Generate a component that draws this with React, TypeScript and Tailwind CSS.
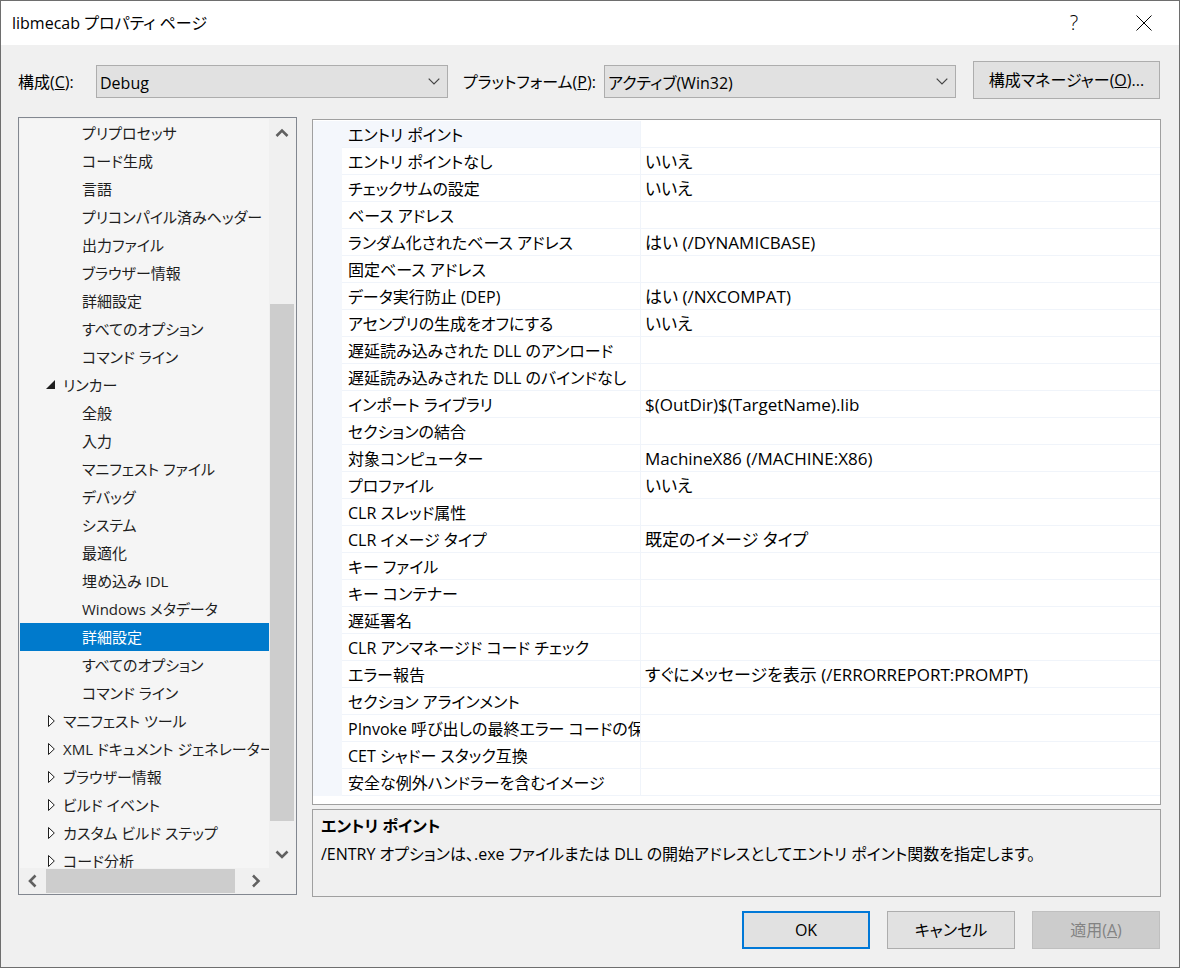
import { useState } from "react";
import type { ReactNode } from "react";

type TreeNode = { label: string; level: 1 | 2; open?: boolean };

const tree: TreeNode[] = [
  { label: "プリプロセッサ", level: 2 },
  { label: "コード生成", level: 2 },
  { label: "言語", level: 2 },
  { label: "プリコンパイル済みヘッダー", level: 2 },
  { label: "出力ファイル", level: 2 },
  { label: "ブラウザー情報", level: 2 },
  { label: "詳細設定", level: 2 },
  { label: "すべてのオプション", level: 2 },
  { label: "コマンド ライン", level: 2 },
  { label: "リンカー", level: 1, open: true },
  { label: "全般", level: 2 },
  { label: "入力", level: 2 },
  { label: "マニフェスト ファイル", level: 2 },
  { label: "デバッグ", level: 2 },
  { label: "システム", level: 2 },
  { label: "最適化", level: 2 },
  { label: "埋め込み IDL", level: 2 },
  { label: "Windows メタデータ", level: 2 },
  { label: "詳細設定", level: 2 },
  { label: "すべてのオプション", level: 2 },
  { label: "コマンド ライン", level: 2 },
  { label: "マニフェスト ツール", level: 1 },
  { label: "XML ドキュメント ジェネレーター", level: 1 },
  { label: "ブラウザー情報", level: 1 },
  { label: "ビルド イベント", level: 1 },
  { label: "カスタム ビルド ステップ", level: 1 },
  { label: "コード分析", level: 1 },
];

const properties: [string, string][] = [
  ["エントリ ポイント", ""],
  ["エントリ ポイントなし", "いいえ"],
  ["チェックサムの設定", "いいえ"],
  ["ベース アドレス", ""],
  ["ランダム化されたベース アドレス", "はい (/DYNAMICBASE)"],
  ["固定ベース アドレス", ""],
  ["データ実行防止 (DEP)", "はい (/NXCOMPAT)"],
  ["アセンブリの生成をオフにする", "いいえ"],
  ["遅延読み込みされた DLL のアンロード", ""],
  ["遅延読み込みされた DLL のバインドなし", ""],
  ["インポート ライブラリ", "$(OutDir)$(TargetName).lib"],
  ["セクションの結合", ""],
  ["対象コンピューター", "MachineX86 (/MACHINE:X86)"],
  ["プロファイル", "いいえ"],
  ["CLR スレッド属性", ""],
  ["CLR イメージ タイプ", "既定のイメージ タイプ"],
  ["キー ファイル", ""],
  ["キー コンテナー", ""],
  ["遅延署名", ""],
  ["CLR アンマネージド コード チェック", ""],
  ["エラー報告", "すぐにメッセージを表示 (/ERRORREPORT:PROMPT)"],
  ["セクション アラインメント", ""],
  ["PInvoke 呼び出しの最終エラー コードの保存", ""],
  ["CET シャドー スタック互換", ""],
  ["安全な例外ハンドラーを含むイメージ", ""],
];

function Arrow({ d }: { d: string }) {
  return (
    <svg viewBox="0 0 14 14" className="size-3.5" fill="none" stroke="#606060" strokeWidth="2.6" aria-hidden="true">
      <path d={d} />
    </svg>
  );
}

function Combo({ id, options }: { id: string; options: string[] }) {
  return (
    <div className="relative min-w-0 flex-1">
      <select
        id={id}
        className="block h-[33px] w-full appearance-none border border-[#adadad] bg-[#e1e1e1] pt-0.5 pr-8 pl-[3px] text-black"
      >
        {options.map((o) => (
          <option key={o}>{o}</option>
        ))}
      </select>
      <svg
        viewBox="0 0 12 7"
        className="pointer-events-none absolute top-[13px] right-2 h-[7px] w-3"
        fill="none"
        stroke="#444"
        strokeWidth="1.2"
        aria-hidden="true"
      >
        <path d="M0.7 0.7 6 6l5.3-5.3" />
      </svg>
    </div>
  );
}

function DialogButton({ children, look }: { children: ReactNode; look: "default" | "plain" | "disabled" }) {
  const styles = {
    default: "border-2 border-[#0078d7] bg-[#e1e1e1]",
    plain: "border border-[#adadad] bg-[#e1e1e1]",
    disabled: "border border-[#bfbfbf] bg-[#cccccc] text-[#838383]",
  };
  return (
    <button type="button" disabled={look === "disabled"} className={`h-[38px] w-32 ${styles[look]}`}>
      {children}
    </button>
  );
}

export default function App() {
  const [selectedNode, setSelectedNode] = useState(18);
  const [selectedRow, setSelectedRow] = useState(0);

  return (
    <div className="flex h-screen flex-col border border-[#6e6e6e] bg-[#f0f0f0] font-['Open_Sans','Noto_Sans_CJK_JP',sans-serif] text-base leading-6 text-black [font-feature-settings:'palt']">
      <header className="flex h-11 shrink-0 items-center bg-white pl-[11px]">
        <h1 className="flex-1">libmecab プロパティ ページ</h1>
        <button
          type="button"
          aria-label="ヘルプ"
          className="flex h-full w-[70px] items-center justify-center text-xl font-[350]"
        >
          ?
        </button>
        <button type="button" aria-label="閉じる" className="flex h-full w-[70px] items-center justify-center">
          <svg viewBox="0 0 16 16" className="size-4" stroke="#000" strokeWidth="1" aria-hidden="true">
            <path d="M0.5 0.5l15 15M15.5 0.5l-15 15" />
          </svg>
        </button>
      </header>

      <div className="flex shrink-0 items-center pt-4 pr-[19px] pl-[17px]">
        <label htmlFor="config" className="w-[78px] shrink-0 whitespace-nowrap">
          構成(<u>C</u>):
        </label>
        <Combo id="config" options={["Debug", "Release"]} />
        <label htmlFor="platform" className="ml-[15px] w-[141px] shrink-0 whitespace-nowrap">
          プラットフォーム(<u>P</u>):
        </label>
        <Combo id="platform" options={["アクティブ(Win32)", "Win32", "x64"]} />
        <button
          type="button"
          className="mb-[3px] ml-[17px] h-[38px] w-[187px] shrink-0 border border-[#adadad] bg-[#e1e1e1] whitespace-nowrap"
        >
          構成マネージャー(<u>O</u>)...
        </button>
      </div>

      <main className="grid min-h-0 flex-1 grid-cols-[279px_minmax(0,1fr)] grid-rows-[minmax(0,1fr)] gap-[15px] pt-[15px] pr-[18px] pl-[17px]">
        <nav
          aria-label="構成プロパティ"
          className="mb-0.5 grid grid-cols-[249px_24px] grid-rows-[minmax(0,1fr)_24px] gap-px border border-[#828790] bg-[#f0f0f0] p-px"
        >
          <ul role="tree" className="min-h-0 overflow-hidden bg-[#f5f5f5] text-[15px] text-[#1e1e1e]">
            {tree.map((node, i) => (
              <li
                key={i}
                role="treeitem"
                aria-level={node.level}
                aria-selected={i === selectedNode}
                aria-expanded={node.level === 1 ? !!node.open : undefined}
                onClick={() => setSelectedNode(i)}
                className={`flex h-7 items-center whitespace-nowrap ${node.level === 1 ? "pl-[26px]" : "pl-[62px]"} ${
                  i === selectedNode ? "bg-[#007acc] text-white" : ""
                }`}
              >
                {node.level === 1 && (
                  <svg viewBox="0 0 12 14" className="mr-[5px] h-3.5 w-3 shrink-0" aria-hidden="true">
                    {node.open ? (
                      <path d="M9 2v9H0z" fill="#1e1e1e" />
                    ) : (
                      <path d="M2.5 1.5v11L8.3 7z" fill="#fff" stroke="#1e1e1e" />
                    )}
                  </svg>
                )}
                {node.label}
              </li>
            ))}
          </ul>
          <div className="flex flex-col items-center">
            <button type="button" aria-label="上へスクロール" className="flex h-7 shrink-0 items-center">
              <Arrow d="M1.5 10 7 4.5l5.5 5.5" />
            </button>
            <div className="flex w-full flex-1 flex-col pt-[157px] pb-[19px]">
              <div className="flex-1 bg-[#cdcdcd]" />
            </div>
            <button type="button" aria-label="下へスクロール" className="flex h-7 shrink-0 items-center">
              <Arrow d="M1.5 4.5 7 10l5.5-5.5" />
            </button>
          </div>
          <div className="flex items-center">
            <button type="button" aria-label="左へスクロール" className="flex w-[26px] shrink-0 justify-center">
              <Arrow d="M9.5 1.5 4 7l5.5 5.5" />
            </button>
            <div className="h-full w-[189px] bg-[#cdcdcd]" />
            <button type="button" aria-label="右へスクロール" className="ml-2 flex w-[26px] shrink-0 justify-center">
              <Arrow d="M4 1.5 9.5 7 4 12.5" />
            </button>
          </div>
        </nav>

        <div className="flex min-h-0 flex-col gap-1 pt-0.5">
          <section className="min-h-0 flex-1 overflow-hidden border border-[#a0a0a0] bg-white pt-px">
            <table className="w-full table-fixed border-separate border-spacing-0">
              <colgroup>
                <col className="w-[29px]" />
                <col className="w-[299px]" />
                <col />
              </colgroup>
              <tbody>
                {properties.map(([name, value], i) => (
                  <tr key={name} onClick={() => setSelectedRow(i)}>
                    <td className="h-[27px] bg-[#f4f7fc] p-0" />
                    <th
                      scope="row"
                      className={`overflow-hidden border-r border-b border-[#f0f4fa] p-0 pt-0.5 pl-1.5 text-left font-normal whitespace-nowrap ${
                        i === selectedRow ? "bg-[#f4f7fc]" : ""
                      }`}
                    >
                      {name}
                    </th>
                    <td className="overflow-hidden border-b border-[#f0f4fa] p-0 pt-0.5 pl-1 text-[17px] whitespace-nowrap">
                      {value}
                    </td>
                  </tr>
                ))}
              </tbody>
            </table>
          </section>
          <section className="h-[88px] shrink-0 border border-[#a0a0a0] px-2 pt-1">
            <h2 className="font-bold">{properties[0][0]}</h2>
            <p className="mt-1">
              /ENTRY オプションは、.exe ファイルまたは DLL の開始アドレスとしてエントリ ポイント関数を指定します。
            </p>
          </section>
        </div>
      </main>

      <footer className="flex shrink-0 justify-end gap-[17px] pt-3.5 pr-[19px] pb-[18px]">
        <DialogButton look="default">OK</DialogButton>
        <DialogButton look="plain">キャンセル</DialogButton>
        <DialogButton look="disabled">
          適用(<u>A</u>)
        </DialogButton>
      </footer>
    </div>
  );
}
